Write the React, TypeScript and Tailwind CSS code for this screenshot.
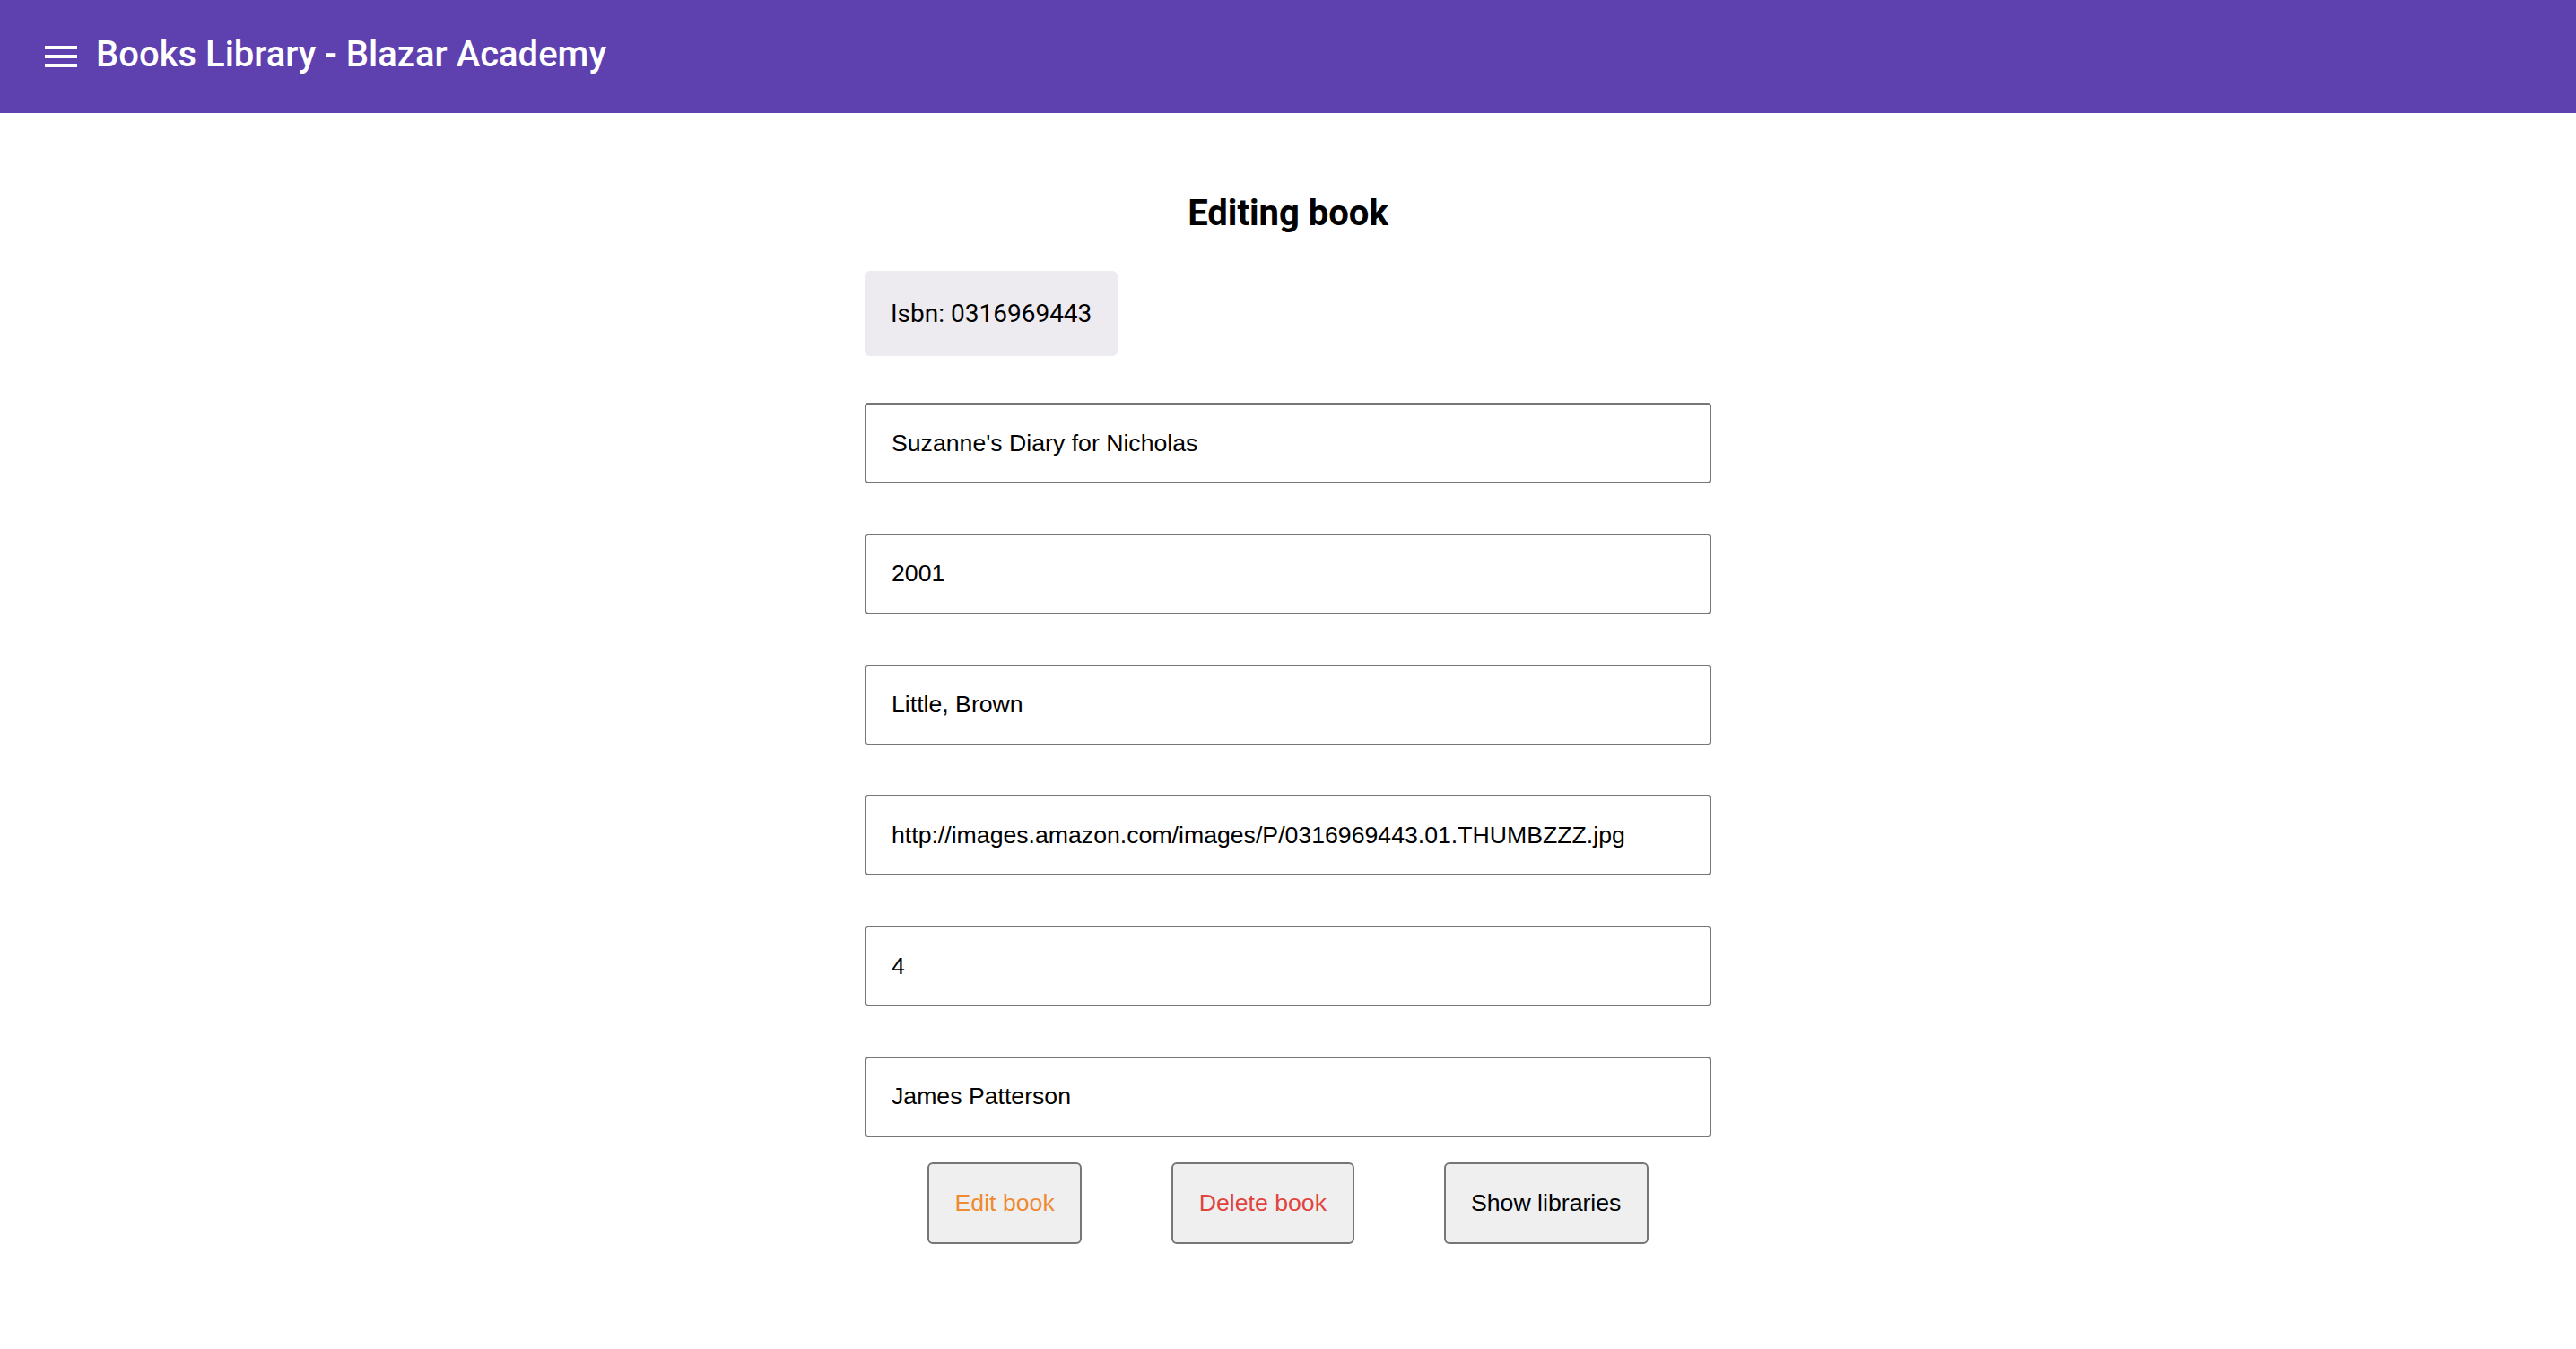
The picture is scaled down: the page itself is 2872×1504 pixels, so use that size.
import React from "react";

const fields = [
  "Suzanne's Diary for Nicholas",
  "2001",
  "Little, Brown",
  "http://images.amazon.com/images/P/0316969443.01.THUMBZZZ.jpg",
  "4",
  "James Patterson",
];

export default function App() {
  return (
    <div className="min-h-screen bg-white">
      <header className="h-[126px] bg-[#5f40af] flex items-center pl-[44px]">
        <button className="w-[48px] h-[48px] flex items-center justify-center" aria-label="menu">
          <svg width="48" height="48" viewBox="0 0 24 24" fill="#ffffff">
            <path d="M3 18h18v-2H3v2zm0-5h18v-2H3v2zm0-7v2h18V6H3z" />
          </svg>
        </button>
        <h1 className="ml-[15px] mb-[4px] text-white text-[40px] leading-[40px] font-medium font-['Roboto',sans-serif]">
          Books Library - Blazar Academy
        </h1>
      </header>
      <main className="flex flex-col items-center">
        <div className="w-[944px] flex flex-col">
          <h2 className="mt-[92px] text-center text-black text-[40px] leading-[40px] font-bold font-['Roboto',sans-serif]">
            Editing book
          </h2>
          <div className="mt-[44px] self-start h-[95px] px-[29px] flex items-center bg-[#edebf0] rounded-[6px] text-[28px] text-black font-['Roboto',sans-serif]">
            Isbn: 0316969443
          </div>
          {fields.map((v, i) => (
            <input
              key={i}
              readOnly
              value={v}
              className={`${i === 0 ? "mt-[52px]" : "mt-[55.75px]"} h-[90px] w-full border-2 border-[#767676] rounded-[4px] pl-[28px] text-[26.67px] text-black bg-white outline-none font-['Liberation_Sans',Arial,sans-serif]`}
            />
          ))}
          <div className="mt-[28px] flex justify-center gap-[100px]">
            <button className="h-[91px] px-[28.5px] border-2 border-[#767676] bg-[#efefef] rounded-[6px] text-[26.67px] text-[#ee8a32] font-['Liberation_Sans',Arial,sans-serif]">
              Edit book
            </button>
            <button className="h-[91px] px-[28.5px] border-2 border-[#767676] bg-[#efefef] rounded-[6px] text-[26.67px] text-[#e0443e] font-['Liberation_Sans',Arial,sans-serif]">
              Delete book
            </button>
            <button className="h-[91px] px-[28.5px] border-2 border-[#767676] bg-[#efefef] rounded-[6px] text-[26.67px] text-black font-['Liberation_Sans',Arial,sans-serif]">
              Show libraries
            </button>
          </div>
        </div>
      </main>
    </div>
  );
}
